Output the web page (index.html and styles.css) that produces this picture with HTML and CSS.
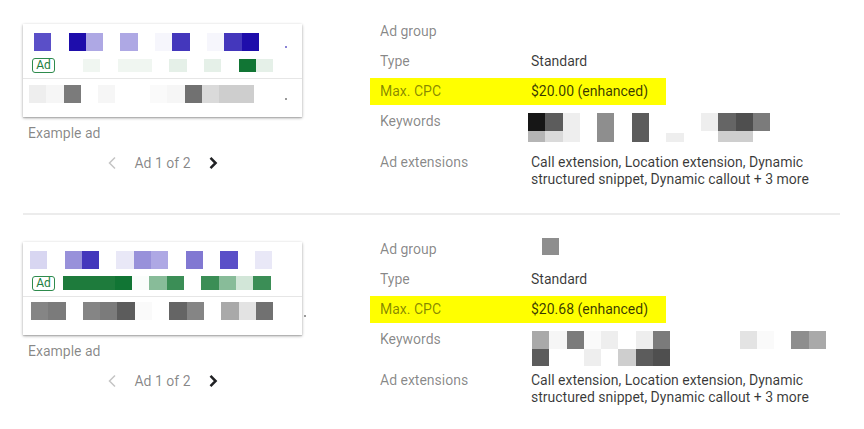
FILE: index.html
```html
<!DOCTYPE html>
<html>
<head>
<meta charset="utf-8">
<link rel="stylesheet" href="styles.css">
</head>
<body>
<div class="wrap">

  <section class="item">
    <div class="preview">
      <div class="card">
        <div class="px line1 ml11"><i class="u3"></i><i></i><i class="u1"></i><i class="u6"></i><i></i><i class="u6"></i><i></i><i class="u9"></i><i class="u2"></i><i></i><i class="u9"></i><i class="u2"></i><i class="u1"></i><b class="dot pdot"></b></div>
        <div class="line2">
          <span class="badge">Ad</span>
          <div class="px short ml28"><i class="n7"></i><i></i><i class="n7"></i><i class="n7"></i><i></i><i class="n6"></i><i></i><i class="n6"></i><i></i><i class="n1"></i><i class="n6"></i></div>
        </div>
        <div class="card-bottom">
          <div class="px line3 ml6"><i class="k14"></i><i class="k15"></i><i class="k6"></i><i></i><i class="k15"></i><i></i><i></i><i class="k16"></i><i class="k15"></i><i class="k5"></i><i class="k12"></i><i class="k11"></i><i class="k11"></i><b class="dot gdot"></b></div>
        </div>
      </div>
      <div class="caption">Example ad</div>
      <div class="pager">
        <svg class="chev" width="10" height="14" viewBox="0 0 10 14"><path d="M8 1.5 2.5 7 8 12.5" fill="none" stroke="#c4c4c4" stroke-width="1.5"/></svg>
        <span>Ad 1 of 2</span>
        <svg class="chev" width="10" height="14" viewBox="0 0 10 14"><path d="M2.5 1.8 7.6 7 2.5 12.2" fill="none" stroke="#202124" stroke-width="2.5"/></svg>
      </div>
    </div>
    <div class="details">
      <div class="row"><span class="lbl">Ad group</span><span class="val"></span></div>
      <div class="row"><span class="lbl">Type</span><span class="val">Standard</span></div>
      <div class="row hl"><span class="lbl">Max. CPC</span><span class="val">$20.00 (enhanced)</span></div>
      <div class="row kw">
        <span class="lbl">Keywords</span>
        <div class="val kwv mlm3">
          <div class="px kwrow"><i class="k1"></i><i class="k3"></i><i class="k14"></i><i></i><i class="k8"></i><i></i><i class="k3"></i><i></i><i></i><i></i><i class="k14"></i><i class="k4"></i><i class="k2"></i><i class="k6"></i></div>
          <div class="px kwrow cut"><i class="k10"></i><i class="k12"></i><i class="k14"></i><i></i><i class="k8"></i><i></i><i class="k3"></i><i></i><i class="k14 low"></i><i></i><i></i><i class="k11"></i><i class="k11"></i><i></i></div>
        </div>
      </div>
      <div class="row ext"><span class="lbl">Ad extensions</span><span class="val">Call extension, Location extension, Dynamic structured snippet, Dynamic callout + 3 more</span></div>
    </div>
  </section>

  <hr class="divider">

  <section class="item">
    <div class="preview">
      <div class="card">
        <div class="px line1 ml7"><i class="u7"></i><i></i><i class="u5"></i><i class="u2"></i><i></i><i class="u8"></i><i class="u5"></i><i class="u6"></i><i></i><i class="u4"></i><i></i><i class="u3"></i><i></i><i class="u8"></i></div>
        <div class="line2 tight">
          <span class="badge">Ad</span>
          <div class="px tall ml8"><i class="n2"></i><i class="n2"></i><i class="n2"></i><i class="n1"></i><i class="n8"></i><i class="n4"></i><i class="n3"></i><i></i><i class="n3"></i><i class="n4"></i><i class="n5"></i><i class="n3"></i></div>
        </div>
        <div class="card-bottom up">
          <div class="px line3 ml8"><i class="k7"></i><i class="k6"></i><i></i><i class="k7"></i><i class="k6"></i><i class="k3"></i><i class="k16"></i><i></i><i class="k4"></i><i class="k7"></i><i></i><i class="k9"></i><i class="k13"></i><i class="k5"></i><b class="dot gdot"></b></div>
        </div>
      </div>
      <div class="caption">Example ad</div>
      <div class="pager">
        <svg class="chev" width="10" height="14" viewBox="0 0 10 14"><path d="M8 1.5 2.5 7 8 12.5" fill="none" stroke="#c4c4c4" stroke-width="1.5"/></svg>
        <span>Ad 1 of 2</span>
        <svg class="chev" width="10" height="14" viewBox="0 0 10 14"><path d="M2.5 1.8 7.6 7 2.5 12.2" fill="none" stroke="#202124" stroke-width="2.5"/></svg>
      </div>
    </div>
    <div class="details">
      <div class="row"><span class="lbl">Ad group</span><span class="val"><span class="px agv"><i class="k8"></i></span></span></div>
      <div class="row"><span class="lbl">Type</span><span class="val">Standard</span></div>
      <div class="row hl"><span class="lbl">Max. CPC</span><span class="val">$20.68 (enhanced)</span></div>
      <div class="row kw">
        <span class="lbl">Keywords</span>
        <div class="val kwv ml1">
          <div class="px kwrow"><i class="k9"></i><i class="k15"></i><i class="k6"></i><i class="k16"></i><i class="k14"></i><i></i><i class="k14"></i><i class="k6"></i><i></i><i></i><i></i><i></i><i class="k13"></i><i class="k16"></i><i></i><i class="k8"></i><i class="k9"></i></div>
          <div class="px kwrow"><i class="k3"></i><i></i><i></i><i class="k14"></i><i></i><i class="k11"></i><i class="k3"></i><i class="k2"></i></div>
        </div>
      </div>
      <div class="row ext"><span class="lbl">Ad extensions</span><span class="val">Call extension, Location extension, Dynamic structured snippet, Dynamic callout + 3 more</span></div>
    </div>
  </section>

</div>
</body>
</html>
```

FILE: styles.css
```css
* { box-sizing: border-box; }
html, body { margin: 0; padding: 0; background: #fff; }
body {
  font-family: Roboto, "Liberation Sans", Arial, sans-serif;
  font-size: 14px;
  color: rgba(0, 0, 0, 0.78);
  width: 864px;
  height: 429px;
  overflow: hidden;
}
.wrap { margin-left: 23px; width: 817px; }

.item { display: flex; padding-top: 18px; }
.item + .divider + .item { padding-top: 21px; }

.divider {
  margin: 22px 0 0;
  border: 0;
  height: 2px;
  background: #ececec;
}

/* ---------- left preview ---------- */
.preview { width: 279px; flex: none; padding-top: 6px; }
.card {
  height: 93px;
  background: #fff;
  box-shadow: 0 1px 3px rgba(0, 0, 0, 0.32), 0 1px 1px rgba(0, 0, 0, 0.12);
  padding-top: 9px;
}
.line1 { height: 17.5px; }
.line2 { display: flex; align-items: center; height: 14px; margin-top: 7.5px; padding-left: 9px; }
.line2.tight { margin-top: 6.5px; height: 16px; }
.badge {
  display: inline-flex;
  align-items: center;
  justify-content: center;
  width: 23px;
  height: 15px;
  border: 1px solid #2e8b4d;
  border-radius: 3px;
  color: #1e7e3e;
  font-size: 12px;
  line-height: 1;
  flex: none;
}
.card-bottom {
  margin-top: 6px;
  border-top: 1px solid #e6e6e6;
  padding-top: 6px;
}
.card-bottom.up { margin-top: 5px; padding-top: 5px; }
.line3 { height: 17.5px; }

.caption {
  margin-top: 6px;
  padding-left: 5px;
  line-height: 20px;
  color: rgba(0, 0, 0, 0.48);
}
.pager {
  margin-top: 10px;
  display: flex;
  align-items: center;
  justify-content: center;
  gap: 17px;
  line-height: 20px;
  color: rgba(0, 0, 0, 0.48);
}
.chev { display: block; flex: none; }

/* ---------- pixel blocks ---------- */
.px { display: flex; }
.px i { display: block; width: 17.3px; height: 100%; flex: none; }
.px.short { height: 13px; }
.px.tall { height: 14px; }
.dot { display: block; width: 2px; height: 2px; align-self: flex-end; flex: none; }
.pdot { margin-left: 26px; margin-bottom: 3px; background: #8a84d6; }
.gdot { margin-left: 31px; margin-bottom: 3px; background: #9a9a9a; }
.ml1 { margin-left: 1px; }
.mlm3 { margin-left: -3px; }
.ml6 { margin-left: 6px; }
.ml7 { margin-left: 7px; }
.ml8 { margin-left: 8px; }
.ml11 { margin-left: 11px; }
.ml28 { margin-left: 28px; }

.u1 { background: #1e0dab; }
.u2 { background: #4437bc; }
.u3 { background: #5a4fc8; }
.u4 { background: #8178d2; }
.u5 { background: #9891da; }
.u6 { background: #aea8e4; }
.u7 { background: #d8d6f1; }
.u8 { background: #e9e8f7; }
.u9 { background: #f6f6fc; }

.n1 { background: #117534; }
.n2 { background: #1e7b3c; }
.n3 { background: #3b8e56; }
.n4 { background: #88bc99; }
.n5 { background: #d2e6d8; }
.n6 { background: #e5f0e8; }
.n7 { background: #f0f6f1; }
.n8 { background: #fafdfb; }

.k1 { background: #161616; }
.k2 { background: #4f4f4f; }
.k3 { background: #5c5c5c; }
.k4 { background: #656565; }
.k5 { background: #717171; }
.k6 { background: #7b7b7b; }
.k7 { background: #858585; }
.k8 { background: #8e8e8e; }
.k9 { background: #a9a9a9; }
.k10 { background: #b5b5b5; }
.k11 { background: #cecece; }
.k12 { background: #dadada; }
.k13 { background: #e3e3e3; }
.k14 { background: #eeeeee; }
.k15 { background: #f6f6f6; }
.k16 { background: #fafafa; }

/* ---------- right details ---------- */
.details { margin-left: 68px; flex: 1; }
.row {
  display: flex;
  height: 27px;
  line-height: 27px;
  margin-bottom: 3px;
  padding-left: 10px;
}
.lbl { width: 151px; flex: none; color: rgba(0, 0, 0, 0.48); }
.val { color: rgba(0, 0, 0, 0.78); }
.row.hl {
  width: 296px;
  background: #ffff00;
}
.agv { height: 17px; margin-left: 11px; margin-top: 1.5px; }

.row.kw { height: auto; padding-top: 5px; margin-bottom: 0; line-height: 17px; }
.kwv { height: 35px; }
.kwrow { height: 17.5px; }
.kwrow.cut { height: 11px; }
.kwrow .low { height: 9px; margin-top: 2px; }

.row.ext {
  height: auto;
  margin-top: 6px;
  line-height: 17px;
}
.row.ext .val { width: 290px; }
```
